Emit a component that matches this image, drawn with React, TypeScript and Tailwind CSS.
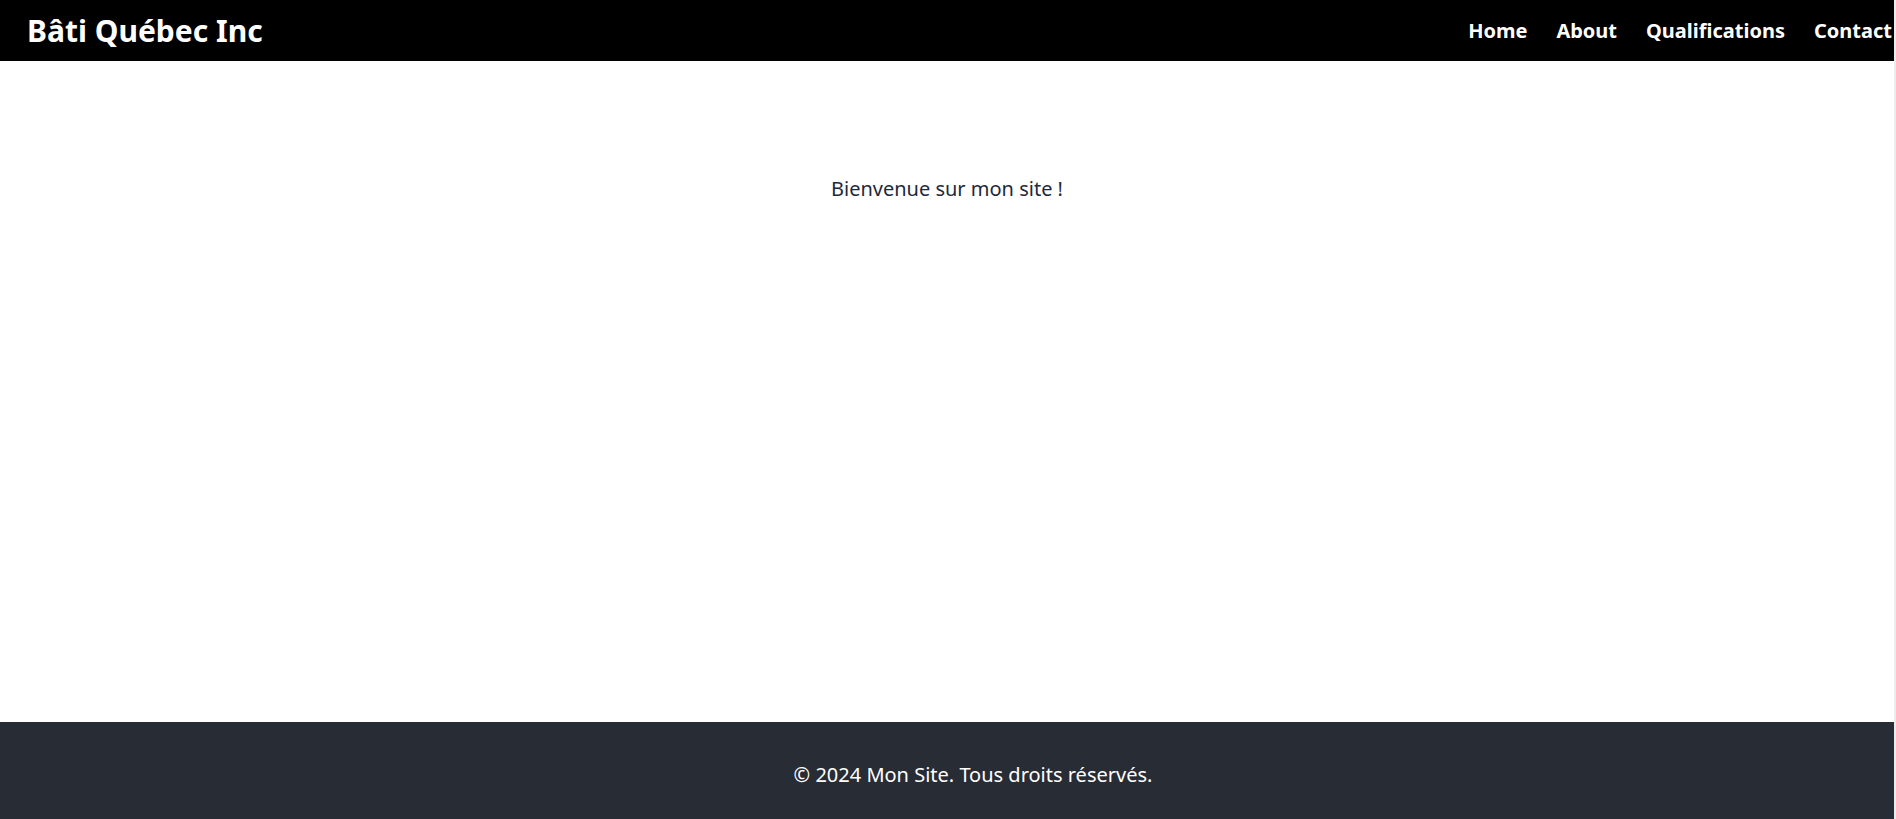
export default function App() {
  return (
    <div className="flex h-[819px] w-full font-['Noto_Sans',sans-serif]">
      <div className="flex min-w-0 flex-1 flex-col overflow-hidden">
        <header className="flex h-[61px] shrink-0 items-center justify-between bg-black pl-[27px] text-white">
          <h1 className="text-[30px] font-bold leading-none">Bâti Québec Inc</h1>
          <nav className="mr-[2px] flex items-center gap-[29px] text-[20px] font-bold">
            <a>Home</a>
            <a>About</a>
            <a>Qualifications</a>
            <a>Contact</a>
          </nav>
        </header>
        <main className="flex-1 bg-white pt-[118px] text-center">
          <p className="text-[20px] leading-none text-[#1e293b]">Bienvenue sur mon site !</p>
        </main>
        <footer className="flex h-[97px] shrink-0 items-center justify-center bg-[#282c34] pl-[52px] text-white">
          <p className="mt-[8px] text-[20px]">© 2024 Mon Site. Tous droits réservés.</p>
        </footer>
      </div>
      <div className="w-[2px] shrink-0 bg-[#ececec]" />
    </div>
  );
}
